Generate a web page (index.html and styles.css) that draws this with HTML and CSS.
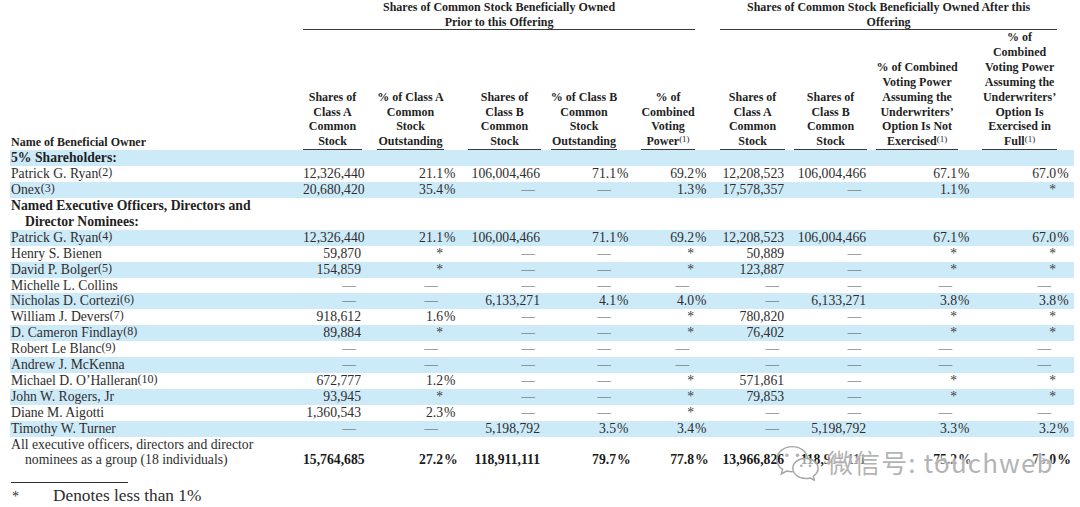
FILE: index.html
```html
<!DOCTYPE html>
<html>
<head>
<meta charset="utf-8">
<title>Beneficial Ownership</title>
<link rel="stylesheet" href="styles.css">
</head>
<body>
<div class="page">
  <table class="own">
    <colgroup>
      <col class="w-name">
      <col class="w-c1"><col class="w-s1">
      <col class="w-c2"><col class="w-s2">
      <col class="w-c3"><col class="w-s3">
      <col class="w-c4"><col class="w-s4">
      <col class="w-c5"><col class="w-s5">
      <col class="w-c6"><col class="w-s6">
      <col class="w-c7"><col class="w-s7">
      <col class="w-c8"><col class="w-s8">
      <col class="w-c9"><col class="w-s9">
    </colgroup>
    <thead>
      <tr>
        <th class="name-h" rowspan="2">Name of Beneficial Owner</th>
        <th class="grp-h" colspan="9"><div class="stack"><span>Shares of Common Stock Beneficially Owned</span><span>Prior to this Offering</span></div></th>
        <th></th>
        <th class="grp-h" colspan="7"><div class="stack"><span>Shares of Common Stock Beneficially Owned After this</span><span>Offering</span></div></th>
        <th></th>
      </tr>
      <tr>
        <th class="ch"><div class="stack"><span>Shares of</span><span>Class A</span><span>Common</span><span>Stock</span></div></th><th></th>
        <th class="ch"><div class="stack"><span>% of Class A</span><span>Common</span><span>Stock</span><span>Outstanding</span></div></th><th></th>
        <th class="ch"><div class="stack"><span>Shares of</span><span>Class B</span><span>Common</span><span>Stock</span></div></th><th></th>
        <th class="ch"><div class="stack"><span>% of Class B</span><span>Common</span><span>Stock</span><span>Outstanding</span></div></th><th></th>
        <th class="ch"><div class="stack"><span>% of</span><span>Combined</span><span>Voting</span><span>Power<sup class="hs">(1)</sup></span></div></th><th></th>
        <th class="ch"><div class="stack"><span>Shares of</span><span>Class A</span><span>Common</span><span>Stock</span></div></th><th></th>
        <th class="ch"><div class="stack"><span>Shares of</span><span>Class B</span><span>Common</span><span>Stock</span></div></th><th></th>
        <th class="ch"><div class="stack"><span>% of Combined</span><span>Voting Power</span><span>Assuming the</span><span>Underwriters’</span><span>Option Is Not</span><span>Exercised<sup class="hs">(1)</sup></span></div></th><th></th>
        <th class="ch"><div class="stack"><span>% of</span><span>Combined</span><span>Voting Power</span><span>Assuming the</span><span>Underwriters’</span><span>Option Is</span><span>Exercised in</span><span>Full<sup class="hs">(1)</sup></span></div></th><th></th>
      </tr>
    </thead>
    <tbody>
      <tr class="b">
        <td class="nm sec">5% Shareholders:</td>
        <td></td><td></td><td></td><td></td><td></td><td></td><td></td><td></td><td></td><td></td>
        <td></td><td></td><td></td><td></td><td></td><td></td><td></td><td></td>
      </tr>
      <tr>
        <td class="nm">Patrick G. Ryan<sup class="fn">(2)</sup></td>
        <td class="n">12,326,440</td><td></td>
        <td class="n">21.1</td><td class="p">%</td>
        <td class="n">106,004,466</td><td></td>
        <td class="n">71.1</td><td class="p">%</td>
        <td class="n">69.2</td><td class="p">%</td>
        <td class="n">12,208,523</td><td></td>
        <td class="n">106,004,466</td><td></td>
        <td class="n">67.1</td><td class="p">%</td>
        <td class="n">67.0</td><td class="p">%</td>
      </tr>
      <tr class="b">
        <td class="nm">Onex<sup class="fn">(3)</sup></td>
        <td class="n">20,680,420</td><td></td>
        <td class="n">35.4</td><td class="p">%</td>
        <td class="n d">—</td><td></td>
        <td class="n d">—</td><td></td>
        <td class="n">1.3</td><td class="p">%</td>
        <td class="n">17,578,357</td><td></td>
        <td class="n d">—</td><td></td>
        <td class="n">1.1</td><td class="p">%</td>
        <td class="n s">*</td><td></td>
      </tr>
      <tr class="two">
        <td class="nm sec">Named Executive Officers, Directors and<span class="ind">Director Nominees:</span></td>
        <td></td><td></td><td></td><td></td><td></td><td></td><td></td><td></td><td></td><td></td>
        <td></td><td></td><td></td><td></td><td></td><td></td><td></td><td></td>
      </tr>
      <tr class="b">
        <td class="nm">Patrick G. Ryan<sup class="fn">(4)</sup></td>
        <td class="n">12,326,440</td><td></td>
        <td class="n">21.1</td><td class="p">%</td>
        <td class="n">106,004,466</td><td></td>
        <td class="n">71.1</td><td class="p">%</td>
        <td class="n">69.2</td><td class="p">%</td>
        <td class="n">12,208,523</td><td></td>
        <td class="n">106,004,466</td><td></td>
        <td class="n">67.1</td><td class="p">%</td>
        <td class="n">67.0</td><td class="p">%</td>
      </tr>
      <tr>
        <td class="nm">Henry S. Bienen</td>
        <td class="n">59,870</td><td></td>
        <td class="n s">*</td><td></td>
        <td class="n d">—</td><td></td>
        <td class="n d">—</td><td></td>
        <td class="n s">*</td><td></td>
        <td class="n">50,889</td><td></td>
        <td class="n d">—</td><td></td>
        <td class="n s">*</td><td></td>
        <td class="n s">*</td><td></td>
      </tr>
      <tr class="b">
        <td class="nm">David P. Bolger<sup class="fn">(5)</sup></td>
        <td class="n">154,859</td><td></td>
        <td class="n s">*</td><td></td>
        <td class="n d">—</td><td></td>
        <td class="n d">—</td><td></td>
        <td class="n s">*</td><td></td>
        <td class="n">123,887</td><td></td>
        <td class="n d">—</td><td></td>
        <td class="n s">*</td><td></td>
        <td class="n s">*</td><td></td>
      </tr>
      <tr>
        <td class="nm">Michelle L. Collins</td>
        <td class="n d">—</td><td></td>
        <td class="n d">—</td><td></td>
        <td class="n d">—</td><td></td>
        <td class="n d">—</td><td></td>
        <td class="n d">—</td><td></td>
        <td class="n d">—</td><td></td>
        <td class="n d">—</td><td></td>
        <td class="n d">—</td><td></td>
        <td class="n d">—</td><td></td>
      </tr>
      <tr class="b">
        <td class="nm">Nicholas D. Cortezi<sup class="fn">(6)</sup></td>
        <td class="n d">—</td><td></td>
        <td class="n d">—</td><td></td>
        <td class="n">6,133,271</td><td></td>
        <td class="n">4.1</td><td class="p">%</td>
        <td class="n">4.0</td><td class="p">%</td>
        <td class="n d">—</td><td></td>
        <td class="n">6,133,271</td><td></td>
        <td class="n">3.8</td><td class="p">%</td>
        <td class="n">3.8</td><td class="p">%</td>
      </tr>
      <tr>
        <td class="nm">William J. Devers<sup class="fn">(7)</sup></td>
        <td class="n">918,612</td><td></td>
        <td class="n">1.6</td><td class="p">%</td>
        <td class="n d">—</td><td></td>
        <td class="n d">—</td><td></td>
        <td class="n s">*</td><td></td>
        <td class="n">780,820</td><td></td>
        <td class="n d">—</td><td></td>
        <td class="n s">*</td><td></td>
        <td class="n s">*</td><td></td>
      </tr>
      <tr class="b">
        <td class="nm">D. Cameron Findlay<sup class="fn">(8)</sup></td>
        <td class="n">89,884</td><td></td>
        <td class="n s">*</td><td></td>
        <td class="n d">—</td><td></td>
        <td class="n d">—</td><td></td>
        <td class="n s">*</td><td></td>
        <td class="n">76,402</td><td></td>
        <td class="n d">—</td><td></td>
        <td class="n s">*</td><td></td>
        <td class="n s">*</td><td></td>
      </tr>
      <tr>
        <td class="nm">Robert Le Blanc<sup class="fn">(9)</sup></td>
        <td class="n d">—</td><td></td>
        <td class="n d">—</td><td></td>
        <td class="n d">—</td><td></td>
        <td class="n d">—</td><td></td>
        <td class="n d">—</td><td></td>
        <td class="n d">—</td><td></td>
        <td class="n d">—</td><td></td>
        <td class="n d">—</td><td></td>
        <td class="n d">—</td><td></td>
      </tr>
      <tr class="b">
        <td class="nm">Andrew J. McKenna</td>
        <td class="n d">—</td><td></td>
        <td class="n d">—</td><td></td>
        <td class="n d">—</td><td></td>
        <td class="n d">—</td><td></td>
        <td class="n d">—</td><td></td>
        <td class="n d">—</td><td></td>
        <td class="n d">—</td><td></td>
        <td class="n d">—</td><td></td>
        <td class="n d">—</td><td></td>
      </tr>
      <tr>
        <td class="nm">Michael D. O’Halleran<sup class="fn">(10)</sup></td>
        <td class="n">672,777</td><td></td>
        <td class="n">1.2</td><td class="p">%</td>
        <td class="n d">—</td><td></td>
        <td class="n d">—</td><td></td>
        <td class="n s">*</td><td></td>
        <td class="n">571,861</td><td></td>
        <td class="n d">—</td><td></td>
        <td class="n s">*</td><td></td>
        <td class="n s">*</td><td></td>
      </tr>
      <tr class="b">
        <td class="nm">John W. Rogers, Jr</td>
        <td class="n">93,945</td><td></td>
        <td class="n s">*</td><td></td>
        <td class="n d">—</td><td></td>
        <td class="n d">—</td><td></td>
        <td class="n s">*</td><td></td>
        <td class="n">79,853</td><td></td>
        <td class="n d">—</td><td></td>
        <td class="n s">*</td><td></td>
        <td class="n s">*</td><td></td>
      </tr>
      <tr>
        <td class="nm">Diane M. Aigotti</td>
        <td class="n">1,360,543</td><td></td>
        <td class="n">2.3</td><td class="p">%</td>
        <td class="n d">—</td><td></td>
        <td class="n d">—</td><td></td>
        <td class="n s">*</td><td></td>
        <td class="n d">—</td><td></td>
        <td class="n d">—</td><td></td>
        <td class="n d">—</td><td></td>
        <td class="n d">—</td><td></td>
      </tr>
      <tr class="b">
        <td class="nm">Timothy W. Turner</td>
        <td class="n d">—</td><td></td>
        <td class="n d">—</td><td></td>
        <td class="n">5,198,792</td><td></td>
        <td class="n">3.5</td><td class="p">%</td>
        <td class="n">3.4</td><td class="p">%</td>
        <td class="n d">—</td><td></td>
        <td class="n">5,198,792</td><td></td>
        <td class="n">3.3</td><td class="p">%</td>
        <td class="n">3.2</td><td class="p">%</td>
      </tr>
      <tr class="two tot">
        <td class="nm">All executive officers, directors and director<span class="ind">nominees as a group (18 individuals)</span></td>
        <td class="n">15,764,685</td><td></td>
        <td class="n">27.2</td><td class="p">%</td>
        <td class="n">118,911,111</td><td></td>
        <td class="n">79.7</td><td class="p">%</td>
        <td class="n">77.8</td><td class="p">%</td>
        <td class="n">13,966,826</td><td></td>
        <td class="n">118,911,111</td><td></td>
        <td class="n">75.2</td><td class="p">%</td>
        <td class="n">75.0</td><td class="p">%</td>
      </tr>
    </tbody>
  </table>

  <div class="fnote">
    <div class="rule"></div>
    <div class="fn-row"><span class="star">*</span><span>Denotes less than 1%</span></div>
  </div>

  <div class="wm">
    <svg class="wm-logo" width="48" height="38" viewBox="0 0 50 38">
      <path d="M19 3C10 3 3 9 3 16.3c0 4.2 2.3 7.9 6 10.3L7.6 31.5l5.6-3.1c1.8.5 3.7.8 5.8.8" fill="none" stroke="#a6a6a6" stroke-width="1.5" stroke-linecap="round"/>
      <path d="M19 3c8.3 0 15 5.2 15.9 11.8" fill="none" stroke="#a6a6a6" stroke-width="1.5" stroke-linecap="round"/>
      <circle cx="13.5" cy="12" r="1.9" fill="#b4b4b4"/>
      <circle cx="24.5" cy="12" r="1.9" fill="#b4b4b4"/>
      <path d="M33 15c-7.4 0-13.4 4.8-13.4 10.6S25.6 36.2 33 36.2c1.6 0 3.1-.2 4.5-.6l4.6 2.4-1.1-4.1c3-2 4.9-4.9 4.9-8.3C45.9 19.8 39.9 15 33 15z" fill="rgba(255,255,255,0.6)" stroke="#a6a6a6" stroke-width="1.5" stroke-linejoin="round"/>
      <circle cx="28.5" cy="23" r="1.5" fill="#b4b4b4"/>
      <circle cx="37.5" cy="23" r="1.5" fill="#b4b4b4"/>
    </svg>
    <span class="wm-text">微信号: touchweb</span>
  </div>
</div>
</body>
</html>
```

FILE: styles.css
```css
* { box-sizing: border-box; }

html, body {
  margin: 0;
  padding: 0;
  background: #ffffff;
}

body {
  font-family: "Liberation Serif", "Times New Roman", serif;
  color: #2d2d2d;
}

.page {
  position: relative;
  width: 1080px;
  height: 507px;
  padding: 0 6px 0 10px;
  overflow: hidden;
}

.own {
  table-layout: fixed;
  width: 1064px;
  border-collapse: separate;
  border-spacing: 0;
  font-size: 13.7px;
}

.own th,
.own td {
  padding: 0;
  font-weight: normal;
}

col.w-name { width: 293px; }
col.w-c1 { width: 59px; }
col.w-s1 { width: 15px; }
col.w-c2 { width: 67px; }
col.w-s2 { width: 24px; }
col.w-c3 { width: 73px; }
col.w-s3 { width: 10px; }
col.w-c4 { width: 66px; }
col.w-s4 { width: 24px; }
col.w-c5 { width: 54px; }
col.w-s5 { width: 25px; }
col.w-c6 { width: 65px; }
col.w-s6 { width: 9px; }
col.w-c7 { width: 73px; }
col.w-s7 { width: 9px; }
col.w-c8 { width: 82px; }
col.w-s8 { width: 24px; }
col.w-c9 { width: 75px; }
col.w-s9 { width: 17px; }

/* header */
.stack {
  display: flex;
  flex-direction: column;
  align-items: center;
  white-space: nowrap;
}

.grp-h {
  font-weight: bold !important;
  font-size: 12px;
  line-height: 14.5px;
  color: #1f1f1f;
  vertical-align: top;
  border-bottom: 1px solid #3a3a3a;
}

.ch {
  font-weight: bold !important;
  font-size: 12px;
  line-height: 14.9px;
  color: #1f1f1f;
  vertical-align: bottom;
  border-bottom: 1px solid #3a3a3a;
}

.name-h {
  font-weight: bold !important;
  font-size: 12px;
  line-height: 14.9px;
  color: #1f1f1f;
  text-align: left;
  vertical-align: bottom;
  padding-left: 1px !important;
}

.hs {
  font-size: 9px;
  font-weight: normal;
  vertical-align: 3px;
  line-height: 0;
}

/* body */
.own tbody td {
  height: 15.9px;
  line-height: 15.9px;
  vertical-align: bottom;
  white-space: nowrap;
}

.own tbody tr.two td {
  height: 31.8px;
}

.own tbody tr.b td {
  background: #cdeaf8;
}

.nm {
  padding-left: 1px !important;
}

.sec {
  font-weight: bold !important;
  color: #1f1f1f;
}

.ind {
  display: block;
  padding-left: 14px;
}

.fn {
  font-size: 12px;
  vertical-align: 2px;
  line-height: 0;
}

.n {
  text-align: right;
  padding-right: 1px !important;
}

.n.d {
  padding-right: 6px !important;
  color: #555;
}

.n.s {
  padding-right: 1px !important;
  color: #444;
}

.p {
  text-align: left;
}

.tot .n,
.tot .p {
  font-weight: bold;
  color: #1a1a1a;
}

/* footnote */
.fnote {
  margin-top: 14px;
}

.rule {
  width: 117px;
  margin-left: 1px;
  border-top: 1px solid #333;
}

.fn-row {
  display: flex;
  align-items: baseline;
  margin-top: 3px;
  font-size: 17.3px;
  line-height: 19px;
}

.star {
  width: 43px;
  padding-left: 2px;
  font-size: 14px;
}

/* watermark overlay */
.wm {
  position: absolute;
  left: 774px;
  top: 443px;
  display: flex;
  align-items: center;
  gap: 5px;
}

.wm-text {
  font-family: "Noto Sans CJK SC", "Noto Sans", sans-serif;
  font-size: 26px;
  line-height: 30px;
  letter-spacing: 1.1px;
  color: rgba(150, 150, 150, 0.72);
  text-shadow: 0 0 2px #fff, 0 0 3px #fff, 0 0 5px rgba(255, 255, 255, 0.9);
}
```
